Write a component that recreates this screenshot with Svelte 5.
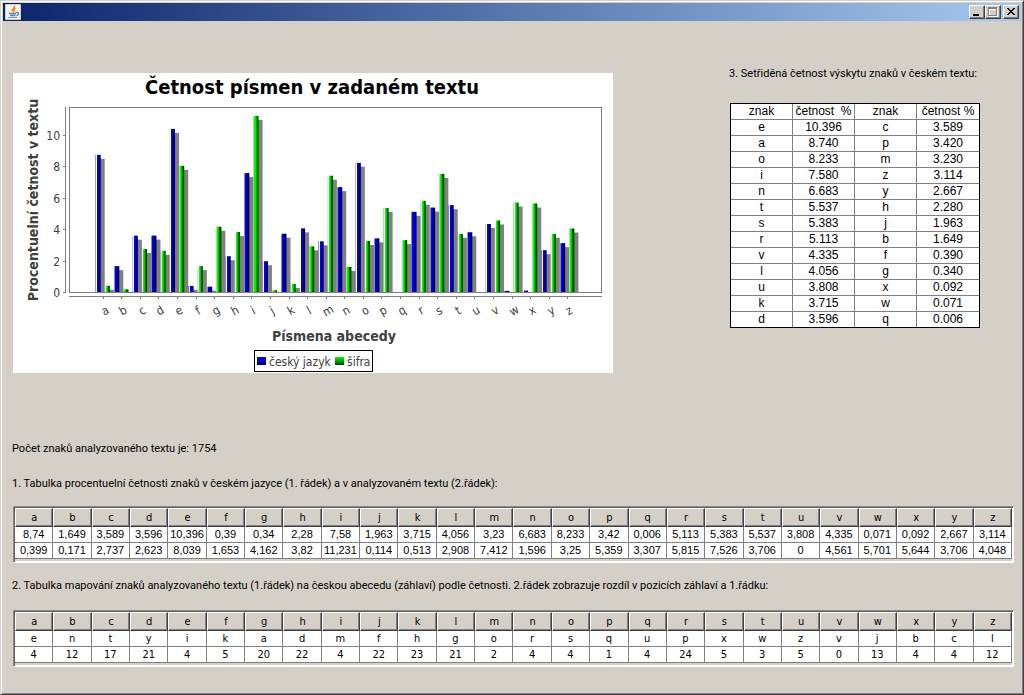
<script lang="ts">
	const letters = 'abcdefghijklmnopqrstuvwxyz'.split('');

	const czech = [
		8.74, 1.649, 3.589, 3.596, 10.396, 0.39, 0.34, 2.28, 7.58, 1.963, 3.715, 4.056, 3.23, 6.683,
		8.233, 3.42, 0.006, 5.113, 5.383, 5.537, 3.808, 4.335, 0.071, 0.092, 2.667, 3.114
	];

	const cipher = [
		0.399, 0.171, 2.737, 2.623, 8.039, 1.653, 4.162, 3.82, 11.231, 0.114, 0.513, 2.908, 7.412,
		1.596, 3.25, 5.359, 3.307, 5.815, 7.526, 3.706, 0, 4.561, 5.701, 5.644, 3.706, 4.048
	];

	const mapping = 'entyikadmfhgorsqupxwzvjbcl'.split('');
	const distances = [
		4, 12, 17, 21, 4, 5, 20, 22, 4, 22, 23, 21, 2, 4, 4, 1, 4, 24, 5, 3, 5, 0, 13, 4, 4, 12
	];

	const byFrequency = letters
		.map((letter, i) => ({ letter, value: czech[i] }))
		.sort((a, b) => b.value - a.value);
	const half = byFrequency.length / 2;
	const sortedRows = byFrequency.slice(0, half).map((left, i) => [left, byFrequency[half + i]]);

	const comma = (value: number) => String(value).replace('.', ',');

	const frequencyTable = [czech.map(comma), cipher.map(comma)];
	const mappingTable = [mapping, distances.map(String)];

	// plot area inside the 600x300 chart
	const plot = { left: 56, right: 588, top: 34, bottom: 219 };
	const plotWidth = plot.right - plot.left;
	const scale = (plot.bottom - plot.top) / (Math.max(...cipher) * 1.05);
	const barWidth = (plotWidth * 0.5) / (letters.length * 2);
	const barGap = (plotWidth * 0.2) / letters.length;
	const categoryWidth = barWidth * 2 + barGap;
	const step = categoryWidth + (plotWidth * 0.2) / (letters.length - 1);

	const categoryStart = (i: number) => plot.left + plotWidth * 0.05 + i * step;
	const categoryMiddle = (i: number) => Math.round(categoryStart(i) + categoryWidth / 2);
	const yOf = (value: number) => plot.bottom - value * scale;

	function makeBar(x: number, value: number, series: string) {
		const shine = Math.round(x + barWidth * 0.1);
		const body = Math.round(x + barWidth * 0.2);
		const shade = Math.round(x + barWidth * 0.8);
		return { x, shine, body, shade, end: x + barWidth, y: yOf(value), height: value * scale, series };
	}

	const bars = letters.flatMap((_, i) => [
		makeBar(categoryStart(i), czech[i], 'blue'),
		makeBar(categoryStart(i) + barWidth + barGap, cipher[i], 'green')
	]);

	const ticks = [0, 2, 4, 6, 8, 10];
</script>

{#snippet letterTable(label: string, rows: string[][], cls: string)}
	<div class="scroll-pane">
		<table class="letters {cls}" aria-label={label}>
			<thead>
				<tr>
					{#each letters as letter}
						<th scope="col">{letter}</th>
					{/each}
				</tr>
			</thead>
			<tbody>
				{#each rows as row}
					<tr>
						{#each row as cell}
							<td>{cell}</td>
						{/each}
					</tr>
				{/each}
			</tbody>
		</table>
	</div>
{/snippet}

<div class="window">
	<header class="titlebar">
		<svg class="app-icon" viewBox="0 0 16 16" width="16" height="16" aria-hidden="true">
			<rect width="16" height="16" rx="1" fill="#c9cdd2" />
			<rect x="1" y="1" width="14" height="14" fill="#f3f2ef" />
			<path d="M9.500 1.500C10.500 4 6 4.500 7.500 7.500M10.500 4C7.500 5.500 10 6 8.500 8.500" fill="none" stroke="#e8862e" stroke-width="1.500" />
			<path d="M4 9.500h7M5 11.500h5.500" stroke="#5b83a3" stroke-width="1.500" />
			<path d="M11 8.500c3.500-.5 3 2.500 .5 3" fill="none" stroke="#5b83a3" stroke-width="1.300" />
			<path d="M3 13.500h9" stroke="#7d9bb3" />
		</svg>
		<div class="controls">
			<button type="button" aria-label="Minimalizovat">
				<svg viewBox="0 0 12 10" width="12" height="10" shape-rendering="crispEdges">
					<rect x="2" y="7" width="6" height="2" />
				</svg>
			</button>
			<button type="button" aria-label="Maximalizovat" disabled>
				<svg viewBox="0 0 12 10" width="12" height="10" shape-rendering="crispEdges">
					<path d="M2 1h9v9h-9zM3 3v6h7v-6z" fill="#fff" fill-rule="evenodd" />
					<path d="M1 0h9v9h-9zM2 2v6h7v-6z" fill="#808080" fill-rule="evenodd" />
				</svg>
			</button>
			<button type="button" class="close" aria-label="Zavřít">
				<svg viewBox="0 0 12 10" width="12" height="10" shape-rendering="crispEdges">
					<path d="M2 1h2v1h1v1h2v-1h1v-1h2v1h-1v1h-1v1h-1v1h1v1h1v1h1v1h-2v-1h-1v-1h-2v1h-1v1h-2v-1h1v-1h1v-1h1v-1h-1v-1h-1v-1h-1z" />
				</svg>
			</button>
		</div>
	</header>

	<main>
		<section class="top">
			<svg class="chart" viewBox="0 0 600 300" role="img" aria-label="Četnost písmen v zadaném textu">
				<defs>
					<linearGradient id="blue-shine"><stop stop-color="#00f" /><stop offset="1" stop-color="#fff" /></linearGradient>
					<linearGradient id="green-shine"><stop stop-color="#0f0" /><stop offset="1" stop-color="#fff" /></linearGradient>
					<linearGradient id="blue-body"><stop offset="0.3" stop-color="#00f" /><stop offset="1" stop-color="#000040" /></linearGradient>
					<linearGradient id="green-body"><stop offset="0.3" stop-color="#0f0" /><stop offset="1" stop-color="#004000" /></linearGradient>
					<linearGradient id="blue-key" x2="0" y2="1"><stop stop-color="#00f" /><stop offset="1" stop-color="#000040" /></linearGradient>
					<linearGradient id="green-key" x2="0" y2="1"><stop stop-color="#0f0" /><stop offset="1" stop-color="#004000" /></linearGradient>
				</defs>
				<rect width="600" height="300" fill="#fff" />
				<text class="title" x="299" y="21">Četnost písmen v zadaném textu</text>

				{#each bars as bar}
					{#if bar.height > 4}
						<rect x={bar.x + 4} y={bar.y + 4} width={barWidth} height={bar.height - 4} fill="#808080" />
					{/if}
					<rect x={bar.x} y={bar.y} width={bar.shine - bar.x} height={bar.height} fill="url(#{bar.series}-shine)" />
					<rect x={bar.shine} y={bar.y} width={bar.body - bar.shine} height={bar.height} fill="#fff" />
					<rect x={bar.body} y={bar.y} width={bar.shade - bar.body} height={bar.height} fill="url(#{bar.series}-body)" />
					<rect class="{bar.series}-shade" x={bar.shade} y={bar.y} width={bar.end - bar.shade} height={bar.height} />
				{/each}

				<g class="axes">
					<rect x="56.5" y="34.5" width="532" height="185" />
					<path d="M52.5 34v186M56 223.500h533" />
					{#each ticks as tick}
						<path d="M50 {Math.round(yOf(tick)) + 0.5}h2" />
					{/each}
					{#each letters as _, i}
						<path d="M{categoryMiddle(i) + 0.5} 224v2" />
					{/each}
				</g>

				{#each ticks as tick}
					<text class="tick" x="47" y={Math.round(yOf(tick)) + 5}>{tick}</text>
				{/each}
				{#each letters as letter, i}
					<text class="category" transform="translate({categoryMiddle(i) + 4} 241) rotate(-30)">{letter}</text>
				{/each}

				<text class="axis-label" transform="translate(25 127) rotate(-90)">Procentuelní četnost v textu</text>
				<text class="axis-label" x="321" y="268">Písmena abecedy</text>

				<rect x="241.5" y="277.5" width="118" height="21" fill="#fff" stroke="#000" />
				<rect x="244" y="284" width="9" height="8" fill="url(#blue-key)" />
				<text class="key" x="256" y="293">český jazyk</text>
				<rect x="322" y="284" width="9" height="8" fill="url(#green-key)" />
				<text class="key" x="334" y="293">šifra</text>
			</svg>

			<div class="sorted-panel">
				<p id="sorted-label">3. Setřiděná četnost výskytu znaků v českém textu:</p>
				<table class="sorted" aria-labelledby="sorted-label">
					<tbody>
						<tr>
							<th scope="col">znak</th>
							<th scope="col">četnost&nbsp; %</th>
							<th scope="col">znak</th>
							<th scope="col">četnost %</th>
						</tr>
						{#each sortedRows as row}
							<tr>
								{#each row as entry}
									<td>{entry.letter}</td>
									<td>{entry.value.toFixed(3)}</td>
								{/each}
							</tr>
						{/each}
					</tbody>
				</table>
			</div>
		</section>

		<p class="count">Počet znaků analyzovaného textu je: 1754</p>
		<p class="first">1. Tabulka procentuelní četnosti znaků v českém jazyce (1. řádek) a v analyzovaném textu (2.řádek):</p>
		{@render letterTable('Procentuelní četnost znaků', frequencyTable, 'numeric')}
		<p class="second">2. Tabulka mapování znaků analyzovaného textu (1.řádek) na českou abecedu (záhlaví) podle četnosti. 2.řádek zobrazuje rozdíl v pozicích záhlaví a 1.řádku:</p>
		{@render letterTable('Mapování znaků', mappingTable, 'mapping')}
	</main>
</div>

<style>
	:global(body) {
		background: #d4d0c8;
	}

	.window {
		box-sizing: border-box;
		min-height: 100vh;
		padding: 1px;
		border: 1px solid;
		border-color: #d4d0c8 #404040 #404040 #d4d0c8;
		box-shadow: inset 1px 1px #fff, inset -1px -1px #808080;
		background: #d4d0c8;
		color: #000;
		font: 11px/14px Tahoma, 'DejaVu Sans Condensed', 'DejaVu Sans', sans-serif;
	}

	.titlebar {
		display: flex;
		align-items: center;
		justify-content: space-between;
		height: 18px;
		margin: 1px;
		padding: 0 2px;
		background: linear-gradient(90deg, #0a246a, #a6caf0);
	}

	.app-icon {
		display: block;
	}

	.controls {
		display: flex;
	}

	button {
		display: flex;
		box-sizing: border-box;
		width: 16px;
		height: 14px;
		padding: 1px;
		border: 1px solid;
		border-color: #fff #404040 #404040 #fff;
		box-shadow: inset -1px -1px #808080;
		background: #d4d0c8;
	}

	.close {
		margin-left: 2px;
	}

	main {
		padding: 45px 8px 25px 11px;
	}

	p {
		margin: 0 0 0 -1px;
		font-family: Tahoma, Roboto, sans-serif;
	}

	.top {
		display: flex;
		justify-content: space-between;
	}

	.chart {
		flex: 0 1 600px;
		min-width: 0;
		height: auto;
		margin-top: 6px;
		align-self: flex-start;
	}

	.title {
		font-size: 20px;
		font-weight: 700;
		text-anchor: middle;
	}

	.axis-label {
		fill: #404040;
		font-size: 14px;
		font-weight: 700;
		text-anchor: middle;
	}

	.tick,
	.category,
	.key {
		fill: #404040;
		font-size: 12px;
	}

	.tick {
		text-anchor: end;
	}

	.category {
		text-anchor: middle;
	}

	.axes {
		fill: none;
		stroke: #808080;
	}

	.blue-shade {
		fill: #000040;
	}

	.green-shade {
		fill: #004000;
	}

	.sorted-panel {
		flex: none;
		width: 250px;
		margin-right: 34px;
		white-space: nowrap;
	}

	table {
		border-spacing: 0;
		table-layout: fixed;
		text-align: center;
	}

	th,
	td {
		box-sizing: border-box;
		padding: 0;
		border: 0 solid #808080;
		border-width: 0 1px 1px 0;
		font-weight: 400;
		white-space: nowrap;
	}

	.sorted {
		width: 250px;
		margin-top: 22px;
		border: 1px solid #000;
		background: #fff;
		font: 12px/15px Arial, 'Liberation Sans', sans-serif;
	}

	.sorted tr > :last-child {
		border-right: 0;
	}

	.sorted tr:last-child > td {
		border-bottom: 0;
	}

	.count {
		margin-top: 69px;
	}

	.first {
		margin-top: 21px;
	}

	.second {
		margin-top: 16px;
	}

	.scroll-pane {
		margin-top: 15px;
		padding: 1px 1px 3px;
		border: 1px solid;
		border-color: #8c8a84 #fff #fff #8c8a84;
		box-shadow: inset 1px 1px #606060, inset -1px -1px #fff;
	}

	.second + .scroll-pane {
		margin-top: 17px;
	}

	.letters {
		width: 100%;
	}

	.letters th {
		height: 19px;
		border: 1px solid;
		border-color: #fff #404040 #404040 #fff;
		box-shadow: inset -1px -1px #808080;
		line-height: 16px;
	}

	.letters td {
		height: 16px;
		background: #fff;
		line-height: 15px;
	}

	.numeric td {
		font-family: Arial, 'Liberation Sans', sans-serif;
	}
</style>
